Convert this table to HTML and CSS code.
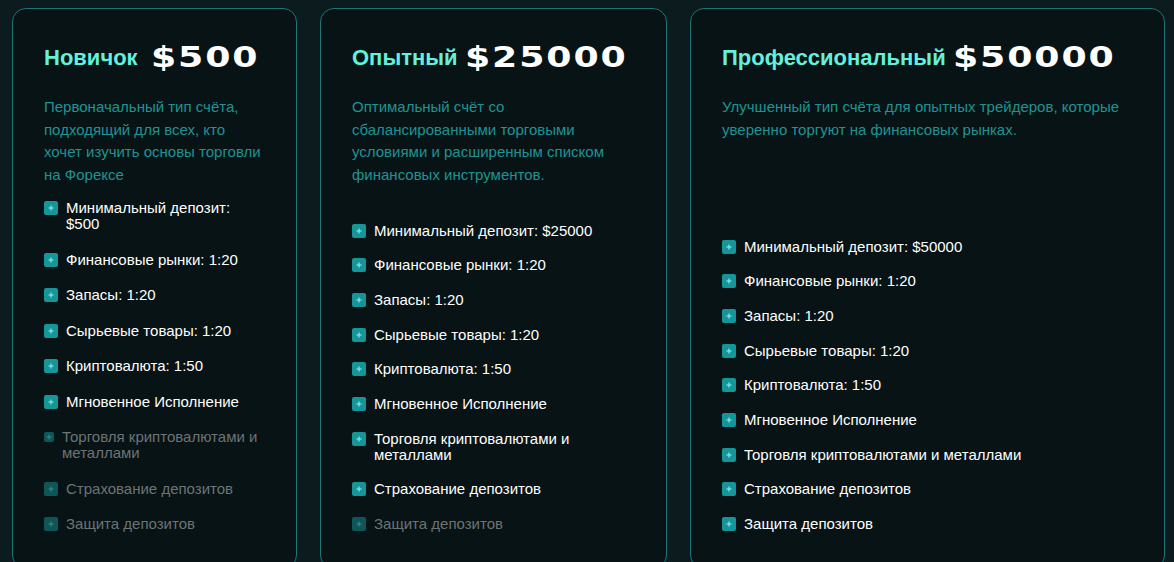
FILE: index.html
```html
<!DOCTYPE html>
<html lang="en">
<head>
    <meta charset="UTF-8">
    <meta name="viewport" content="width=device-width, initial-scale=1.0">
    <title>Account Types</title>
    <link rel="stylesheet" href="styles.css">
</head>
<body>

    <!-- Account plans -->
    <div class="plans">

        <div class="plan">
            <h2 class="plan-title"><span class="plan-name">Новичок </span><span class="plan-price">$500</span></h2>
            <p class="plan-desc">Первоначальный тип счёта, подходящий для всех, кто хочет изучить основы торговли на Форексе</p>
            <ul class="features loose">
                <li><span class="icon"></span><span>Минимальный депозит: $500</span></li>
                <li><span class="icon"></span><span>Финансовые рынки: 1:20</span></li>
                <li><span class="icon"></span><span>Запасы: 1:20</span></li>
                <li><span class="icon"></span><span>Сырьевые товары: 1:20</span></li>
                <li><span class="icon"></span><span>Криптовалюта: 1:50</span></li>
                <li><span class="icon"></span><span>Мгновенное Исполнение</span></li>
                <li class="off"><span class="icon small"></span><span>Торговля криптовалютами и металлами</span></li>
                <li class="off"><span class="icon"></span><span>Страхование депозитов</span></li>
                <li class="off"><span class="icon"></span><span>Защита депозитов</span></li>
            </ul>
        </div>

        <div class="plan">
            <h2 class="plan-title"><span class="plan-name">Опытный</span><span class="plan-price">$25000</span></h2>
            <p class="plan-desc">Оптимальный счёт со сбалансированными торговыми условиями и расширенным списком финансовых инструментов.</p>
            <ul class="features">
                <li><span class="icon"></span><span>Минимальный депозит: $25000</span></li>
                <li><span class="icon"></span><span>Финансовые рынки: 1:20</span></li>
                <li><span class="icon"></span><span>Запасы: 1:20</span></li>
                <li><span class="icon"></span><span>Сырьевые товары: 1:20</span></li>
                <li><span class="icon"></span><span>Криптовалюта: 1:50</span></li>
                <li><span class="icon"></span><span>Мгновенное Исполнение</span></li>
                <li><span class="icon"></span><span>Торговля криптовалютами и металлами</span></li>
                <li><span class="icon"></span><span>Страхование депозитов</span></li>
                <li class="off"><span class="icon"></span><span>Защита депозитов</span></li>
            </ul>
        </div>

        <div class="plan">
            <h2 class="plan-title"><span class="plan-name">Профессиональный</span><span class="plan-price">$50000</span></h2>
            <p class="plan-desc">Улучшенный тип счёта для опытных трейдеров, которые уверенно торгуют на финансовых рынках.</p>
            <ul class="features">
                <li><span class="icon"></span><span>Минимальный депозит: $50000</span></li>
                <li><span class="icon"></span><span>Финансовые рынки: 1:20</span></li>
                <li><span class="icon"></span><span>Запасы: 1:20</span></li>
                <li><span class="icon"></span><span>Сырьевые товары: 1:20</span></li>
                <li><span class="icon"></span><span>Криптовалюта: 1:50</span></li>
                <li><span class="icon"></span><span>Мгновенное Исполнение</span></li>
                <li><span class="icon"></span><span>Торговля криптовалютами и металлами</span></li>
                <li><span class="icon"></span><span>Страхование депозитов</span></li>
                <li><span class="icon"></span><span>Защита депозитов</span></li>
            </ul>
        </div>

    </div>

</body>
</html>
```

FILE: styles.css
```css
/* Basic reset */
* {
    margin: 0;
    padding: 0;
    box-sizing: border-box;
}

body {
    font-family: "Liberation Sans", Arial, sans-serif;
    background: #0c1b1e;
    color: #fff;
    height: 562px;
    overflow: hidden;
}

/* Cards row */
.plans {
    display: grid;
    grid-template-columns: 285px 347px 475px;
    gap: 23px;
    padding: 8px 0 0 12px;
    align-items: stretch;
}

.plan {
    background: #081315;
    border: 1px solid #1f7576;
    border-radius: 14px;
    padding: 29px 31px 36px;
    display: flex;
    flex-direction: column;
}

/* Heading */
.plan-title {
    display: flex;
    align-items: center;
    white-space: pre;
    height: 40px;
}

.plan-name {
    font-size: 22px;
    font-weight: bold;
    color: #63f0dc;
    margin-right: 7px;
}

.plan-price {
    display: inline-block;
    font-family: "DejaVu Sans", sans-serif;
    font-size: 29px;
    font-weight: bold;
    letter-spacing: 1.5px;
    color: #fff;
    transform: scaleX(1.25);
    transform-origin: left center;
    margin-top: -3px;
}

.plan-desc {
    margin-top: 18px;
    margin-bottom: 14px;
    font-size: 15px;
    line-height: 22.5px;
    color: #1f9394;
}

/* Feature list */
.features {
    list-style: none;
    margin-top: auto;
    display: flex;
    flex-direction: column;
    gap: 18.7px;
}

.features.loose {
    gap: 19.5px;
}

.features li {
    display: flex;
    align-items: flex-start;
    gap: 8px;
    font-size: 15px;
    line-height: 16px;
    color: #fff;
}

.icon {
    position: relative;
    flex: 0 0 14px;
    width: 14px;
    height: 14px;
    margin-top: 1px;
    border-radius: 2px;
    background: #15979a;
}

.icon::before,
.icon::after {
    content: "";
    position: absolute;
    left: 50%;
    top: 50%;
    background: #a6eeee;
}

.icon::before {
    width: 5px;
    height: 1px;
    transform: translate(-50%, -50%);
}

.icon::after {
    width: 1px;
    height: 5px;
    transform: translate(-50%, -50%);
}

.icon.small {
    flex-basis: 10px;
    width: 10px;
    height: 10px;
    margin-top: 3px;
}

.features li.off {
    color: #6c7475;
}

.features li.off .icon {
    background: #0e5759;
}

.features li.off .icon::before,
.features li.off .icon::after {
    background: #3f8c8d;
}
```
